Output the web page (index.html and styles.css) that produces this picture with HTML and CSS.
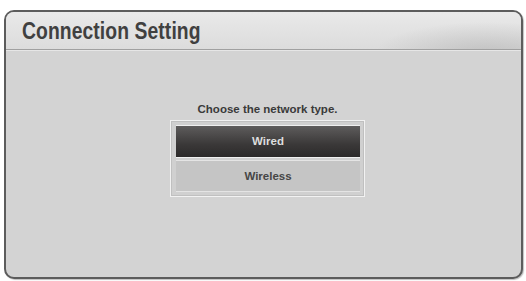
FILE: index.html
```html
<!DOCTYPE html>
<html>
<head>
<meta charset="utf-8">
<link rel="stylesheet" href="styles.css">
</head>
<body>
<div class="panel">
  <div class="header"><span class="title">Connection Setting</span></div>
  <div class="content">
    <div class="prompt">Choose the network type.</div>
    <div class="menu">
      <div class="item item-active">Wired</div>
      <div class="item">Wireless</div>
    </div>
  </div>
</div>
</body>
</html>
```
FILE: styles.css
```css
html, body {
  margin: 0;
  padding: 0;
  background: #ffffff;
}
body {
  width: 526px;
  height: 281px;
  overflow: hidden;
  font-family: "Liberation Sans", Arial, sans-serif;
}
.panel {
  box-sizing: border-box;
  margin: 10px 3px 0 4px;
  width: 519px;
  height: 269px;
  border: 2px solid #5c5c5c;
  border-radius: 10px;
  background: #d3d3d3;
  overflow: hidden;
  display: flex;
  flex-direction: column;
  box-shadow: 1px 1px 1px rgba(0,0,0,0.25);
}
.header {
  height: 37px;
  flex: none;
  border-bottom: 1px solid #a0a0a0;
  box-shadow: 0 1px 0 #e6e6e6;
  background:
    radial-gradient(ellipse 110px 30px at 480px 40px, rgba(170,170,170,0.5), rgba(170,170,170,0) 100%),
    linear-gradient(to bottom, #e9e9e9, #dcdcdc);
  display: flex;
  align-items: center;
  padding-left: 16px;
}
.title {
  display: inline-block;
  font-size: 23px;
  font-weight: bold;
  color: #404040;
  transform: scaleX(0.84);
  transform-origin: left center;
  white-space: nowrap;
  margin-top: 2px;
  letter-spacing: 0.1px;
}
.content {
  flex: 1;
  display: flex;
  flex-direction: column;
  align-items: center;
  padding-top: 52px;
  padding-left: 8px;
}
.prompt {
  font-size: 11.5px;
  font-weight: bold;
  color: #3a3a3a;
  line-height: 14px;
  margin-bottom: 4px;
}
.menu {
  box-sizing: border-box;
  width: 195px;
  height: 77px;
  border: 1px solid #f2f2f2;
  box-shadow: inset 0 0 0 1px #c0c0c0;
  background: #d0d0d0;
  padding: 4px 4px 4px 5px;
  display: flex;
  flex-direction: column;
  gap: 2px;
}
.item {
  flex: 1;
  display: flex;
  align-items: center;
  justify-content: center;
  font-size: 11.5px;
  font-weight: bold;
  color: #464646;
  background: #c5c5c5;
  border-top: 1px solid #e4e4e4;
  border-bottom: 1px solid #e4e4e4;
}
.item-active {
  color: #dedede;
  background: linear-gradient(to bottom, #5e5c5c, #3a3838 60%, #2c2a2a);
  border-top: 1px solid #f0f0f0;
  border-bottom: 1px solid #f0f0f0;
}
```
